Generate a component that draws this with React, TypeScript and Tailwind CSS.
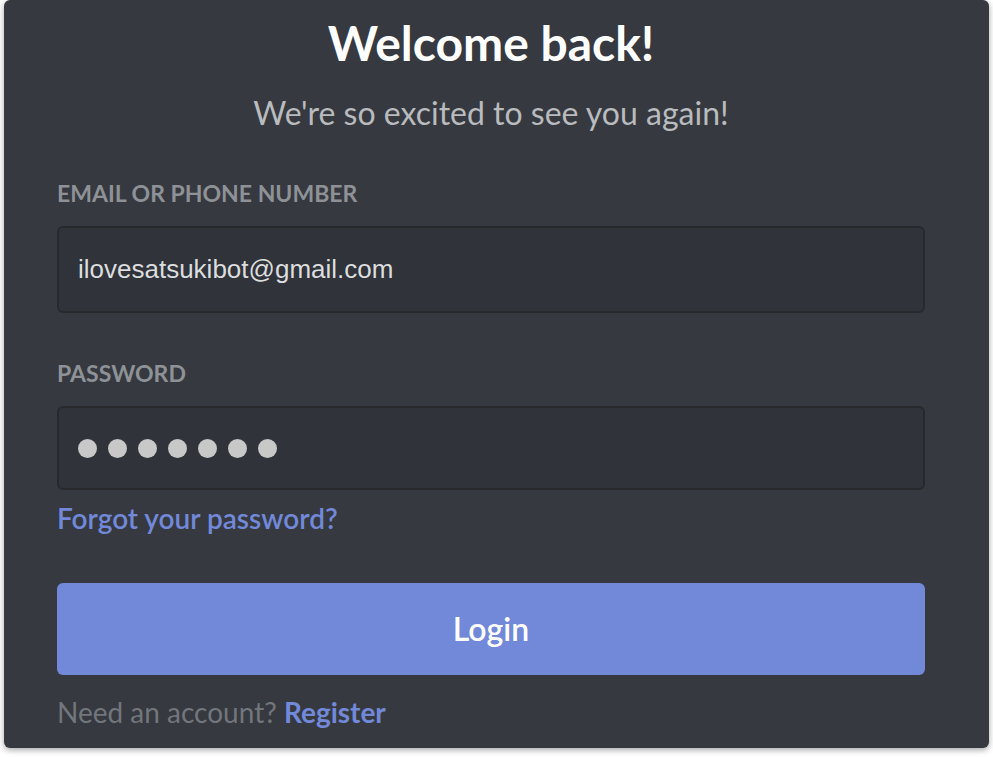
import { useState } from 'react';

export default function App() {
    const [email] = useState('ilovesatsukibot@gmail.com');
    const dots = Array.from({ length: 7 });

    return (
        <div className="h-[757px] w-[993px] bg-white pl-[4px]">
            <div className="h-[748px] w-[985px] rounded-md bg-[#36393f] pl-[53px] pt-[13px] shadow-[0_2px_6px_rgba(0,0,0,0.35)] font-['Lato','Noto_Sans',sans-serif]">
                <div className="w-[868px]">
                    <h1 className="text-center text-[48px] font-bold leading-[60px] text-white">Welcome back!</h1>
                    <p className="mt-[20px] text-center text-[32px] leading-[40px] text-[#b9bbbe]">We're so excited to see you again!</p>

                    <label className="mt-[45px] block text-[23px] font-bold uppercase leading-[30px] text-[#8e9297]">Email or Phone Number</label>
                    <div className="mt-[18px] flex h-[87px] items-center rounded-[6px] border-2 border-[#27292d] bg-[#303339] px-[19px]">
                        <span className="font-['Liberation_Sans',Arial,sans-serif] text-[26px] text-[#dcddde]">{email}</span>
                    </div>

                    <label className="mt-[45px] block text-[23px] font-bold uppercase leading-[30px] text-[#8e9297]">Password</label>
                    <div className="mt-[18px] flex h-[84px] items-center gap-[11px] rounded-[6px] border-2 border-[#27292d] bg-[#303339] px-[19px]">
                        {dots.map((_, i) => (
                            <span key={i} className="h-[19px] w-[19px] rounded-full bg-[#c8c8c8]" />
                        ))}
                    </div>

                    <a className="mt-[10px] block text-[28px] font-semibold leading-[36px] text-[#7289da]">Forgot your password?</a>

                    <button className="mt-[47px] flex h-[92px] w-full items-center justify-center rounded-[6px] bg-[#7289da] text-[32px] font-semibold text-white">
                        Login
                    </button>

                    <p className="mt-[19px] text-[28px] leading-[36px] text-[#72767d]">
                        Need an account? <a className="font-bold text-[#7289da]">Register</a>
                    </p>
                </div>
            </div>
        </div>
    );
}
